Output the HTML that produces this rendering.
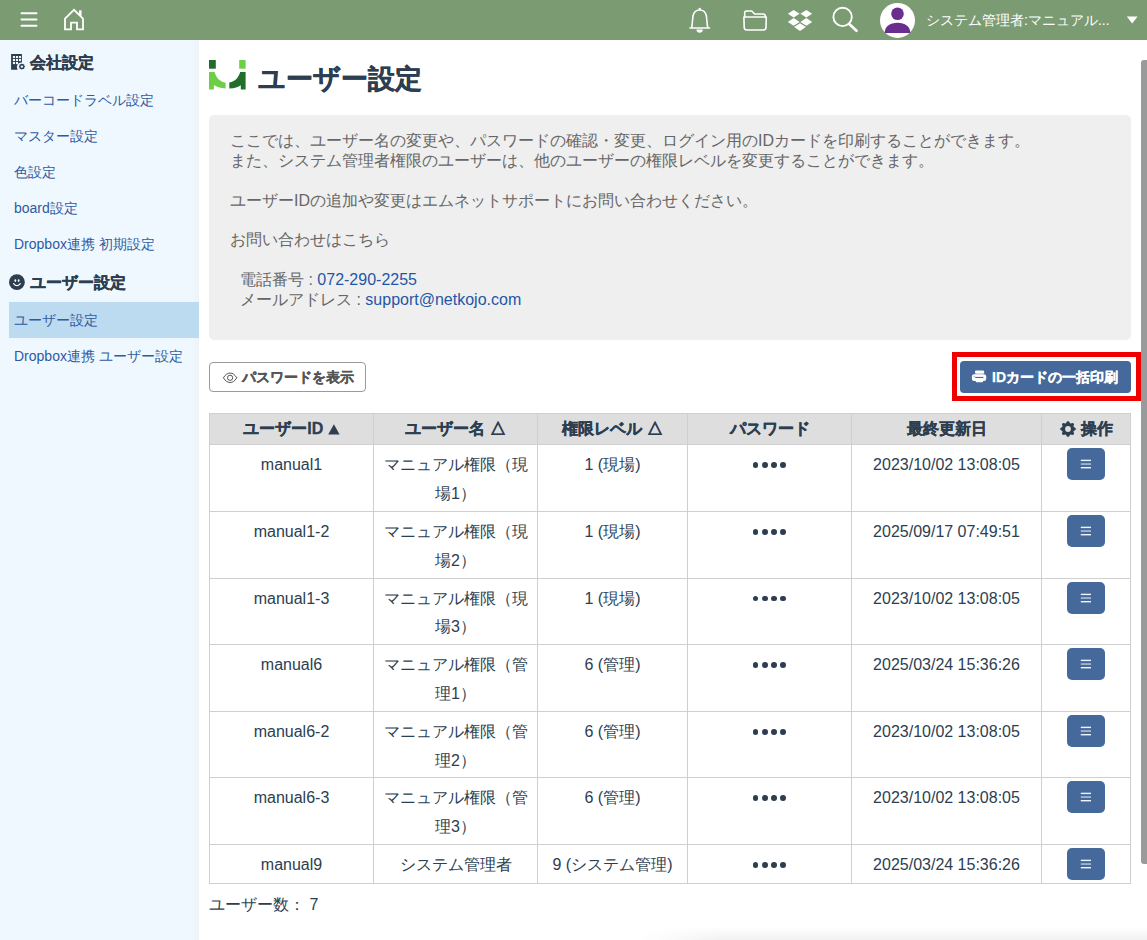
<!DOCTYPE html>
<html lang="ja"><head><meta charset="utf-8">
<style>
*{box-sizing:border-box;margin:0;padding:0}
html,body{width:1147px;height:940px;overflow:hidden;background:#fff;font-family:"Liberation Sans",sans-serif;color:#333}
#top{position:absolute;left:0;top:0;width:1147px;height:40px;background:#7b9b73}
#side{position:absolute;left:0;top:40px;width:199px;height:900px;background:linear-gradient(to right,#f0f8ff 0,#f0f8ff 192px,#eef3f7 199px)}
#main{position:absolute;left:199px;top:40px;width:948px;height:900px;background:#fff}
.abs{position:absolute}
.sh{position:absolute;left:30px;font-size:16px;font-weight:bold;color:#2c3e50;-webkit-text-stroke:0.3px #2c3e50;line-height:20px;white-space:nowrap}
.si{position:absolute;left:14px;font-size:14px;color:#2e5ba0;line-height:20px;white-space:nowrap}
.sel{position:absolute;left:9px;top:302px;width:190px;height:36px;background:#bcdaf0}
#title{position:absolute;left:258px;top:62px;font-size:27px;-webkit-text-stroke:0.4px #2c3e50;font-weight:bold;color:#2c3e50;line-height:34px;white-space:nowrap}
#info{position:absolute;left:209px;top:115px;width:922px;height:225px;background:#efefef;border-radius:5px}
.it{position:absolute;left:230px;font-size:16px;color:#666;line-height:20px;white-space:nowrap}
.lk{color:#1f57a8}
#pwbtn{position:absolute;left:209px;top:362px;width:157px;height:30px;border:1px solid #9a9a9a;border-radius:4px;background:#fff}
#pwbtn span{position:absolute;left:32px;top:5px;font-size:14px;font-weight:bold;color:#555;-webkit-text-stroke:0.25px #555;line-height:18px;white-space:nowrap}
#redbox{position:absolute;left:952px;top:352px;width:189px;height:49px;border:5px solid #f00000}
#idbtn{position:absolute;left:960px;top:361px;width:171px;height:32px;background:#46699b;border-radius:4px}
#idbtn span{position:absolute;left:32px;top:7px;font-size:14px;font-weight:bold;color:#fff;-webkit-text-stroke:0.25px #fff;line-height:18px;white-space:nowrap}
table{position:absolute;left:209px;top:413px;width:921px;border-collapse:collapse;table-layout:fixed}
th,td{border:1px solid #cfcfcf;text-align:center;vertical-align:top;font-size:16px;padding:4px 8px}td{padding:6px 8px 2px}
th{background:#dedede;color:#2c3e50;font-weight:bold;line-height:22.4px;-webkit-text-stroke:0.3px #2c3e50}
td{color:#2c3e50;line-height:28.8px}
.obw{height:28.8px;position:relative}.ob{position:absolute;left:17px;top:-3px;width:38px;height:32px;background:#45699b;border-radius:5px}.ob svg{position:absolute;left:0;top:0}
#count{position:absolute;left:209px;top:895px;font-size:16px;color:#2c3e50;line-height:20px;white-space:nowrap}
#scroll{position:absolute;left:1141px;top:60px;width:6px;height:804px;background:#9a9a9a;border-radius:3px 0 0 3px}
.dots{display:inline-block;height:28.8px;vertical-align:top;position:relative;width:37px}.dots b{float:left;width:5.8px;height:5.8px;border-radius:50%;background:#2c3e50;margin:11px 1.7px 0 1.7px}
</style></head><body>
<div id="top"></div>
<svg class="abs" style="left:0;top:0" width="1147" height="40" viewBox="0 0 1147 40">
<g stroke="#fff" stroke-width="2" stroke-linecap="round" fill="none">
<path d="M21.5 13.2H36.5M21.5 19.5H36.5M21.5 25.7H36.5"/>
</g>
<g stroke="#fff" stroke-width="1.8" fill="none" stroke-linejoin="miter">
<path d="M65 29.3V18.7L74 9.8L83 18.7V29.3H77V22.6H71V29.3Z"/>
<path d="M80.3 15.8V10.3" stroke-width="2.5"/>
</g>
<g stroke="#fff" stroke-width="1.6" fill="none" stroke-linecap="round" stroke-linejoin="round">
<path d="M690 28H709.5M691.6 28C692.6 23 692.5 19 693 16C693.8 12 696.2 10 699.7 10C703.2 10 705.6 12 706.4 16C706.9 19 706.8 23 707.8 28"/>
<path d="M744.7 16.8V12.8Q744.7 11 746.5 11H751.8L754.6 14H763.2Q765.2 14 765.2 16V16.8"/>
<path d="M743.9 17H766.3L766 27.3Q766 30 763.3 30H746.9Q744.2 30 744.2 27.3Z"/>
</g>
<circle cx="699.7" cy="9" r="1.2" fill="#fff"/>
<path d="M696.5 29.5H702.8A3.15 3.15 0 0 1 696.5 29.5Z" fill="#fff"/>
<g fill="#fff">
<path d="M787.8 13.7L793.7 9.9L799.6 13.7L793.7 17.5Z"/>
<path d="M800.4 13.7L806.3 9.9L812.2 13.7L806.3 17.5Z"/>
<path d="M787.8 21.9L793.7 18.1L799.6 21.9L793.7 25.7Z"/>
<path d="M800.4 21.9L806.3 18.1L812.2 21.9L806.3 25.7Z"/>
<path d="M794.1 27.1L800 23.3L805.9 27.1L800 30.9Z"/>
</g>
<g stroke="#fff" fill="none" stroke-linecap="round">
<circle cx="842.6" cy="16.9" r="9.2" stroke-width="1.9"/>
<path d="M849.5 24.3L856.5 30.8" stroke-width="2.6"/>
</g>
<circle cx="897.5" cy="20.4" r="17.5" fill="#fff"/>
<circle cx="897.5" cy="13.7" r="6.3" fill="#6a2e8e"/>
<path d="M884.7 33C884.7 26.5 890 22.8 897.5 22.8C905 22.8 910.3 26.5 910.3 33Z" fill="#6a2e8e"/>
<path d="M1126.8 16.6H1137.6L1132.2 23.5Z" fill="#fff"/>
</svg>
<div class="abs" style="left:926px;top:10px;font-size:14px;color:#fff;line-height:20px;white-space:nowrap">システム管理者:マニュアル...</div>
<div id="side">
</div>
<div id="main"></div>

<!-- sidebar -->
<div class="sh" style="top:53px">会社設定</div>
<div class="si" style="top:90px">バーコードラベル設定</div>
<div class="si" style="top:126px">マスター設定</div>
<div class="si" style="top:162px">色設定</div>
<div class="si" style="top:198px">board設定</div>
<div class="si" style="top:234px">Dropbox連携 初期設定</div>
<div class="sh" style="top:273px">ユーザー設定</div>
<div class="sel"></div>
<div class="si" style="top:310px">ユーザー設定</div>
<div class="si" style="top:346px">Dropbox連携 ユーザー設定</div>

<svg class="abs" style="left:0;top:0" width="260" height="300" viewBox="0 0 260 300">
<rect x="209" y="60" width="6.8" height="8.7" fill="#1f6e2b"/>
<rect x="239.2" y="60" width="6.4" height="8.7" fill="#6ccf45"/>
<path d="M209 72H214.5C216.5 78 219.5 81.5 225.6 82.7V88.5C220 88.2 216.5 86.8 213.9 85.1V89.6H209Z" fill="#6ccf45"/>
<path d="M245.6 72H240.2C238.2 78 235.2 81.5 229.3 82.6V88.5C234.8 88.2 238.2 86.8 240.8 85.2V89.6H245.6Z" fill="#1f6e2b"/>
<path d="M11.1 54.1H21.9V62.6A4.6 4.6 0 0 0 17.6 69.8H11.1Z" fill="#2c3e50"/>
<g fill="#f0f8ff">
<rect x="12.9" y="56" width="2.1" height="2.1"/><rect x="15.9" y="56" width="2.1" height="2.1"/><rect x="18.9" y="56" width="2.1" height="2.1"/>
<rect x="12.9" y="59" width="2.1" height="2.1"/><rect x="15.9" y="59" width="2.1" height="2.1"/><rect x="18.9" y="59" width="2.1" height="2.1"/>
<rect x="12.9" y="62" width="2.1" height="2.1"/><rect x="15.9" y="62" width="2.1" height="2.1"/>
</g>
<g transform="translate(21.9 66.6)" fill="#2c3e50">
<path d="M-2.3 -2.3H2.3V2.3H-2.3Z"/><path d="M0 -3.2L3.2 0L0 3.2L-3.2 0Z"/>
<circle r="1.2" fill="#f0f8ff"/>
</g>
<circle cx="16.9" cy="282.2" r="7.9" fill="#2c3e50"/>
<ellipse cx="15.3" cy="280.6" rx="0.9" ry="1.3" fill="#fff"/>
<ellipse cx="18.6" cy="280.6" rx="0.9" ry="1.3" fill="#fff"/>
<path d="M13.6 283.6Q16.9 287.8 20.3 283.6" stroke="#fff" stroke-width="1.2" fill="none" stroke-linecap="round"/>
</svg>
<div id="title">ユーザー設定</div>
<div id="info"></div>
<div class="it" style="top:131px">ここでは、ユーザー名の変更や、パスワードの確認・変更、ログイン用のIDカードを印刷することができます。</div>
<div class="it" style="top:151px">また、システム管理者権限のユーザーは、他のユーザーの権限レベルを変更することができます。</div>
<div class="it" style="top:191px">ユーザーIDの追加や変更はエムネットサポートにお問い合わせください。</div>
<div class="it" style="top:230px">お問い合わせはこちら</div>
<div class="it" style="top:270px;left:240px">電話番号 : <span class="lk">072-290-2255</span></div>
<div class="it" style="top:290px;left:240px">メールアドレス : <span class="lk">support@netkojo.com</span></div>

<div id="pwbtn"><svg class="abs" style="left:0;top:0" width="40" height="30" viewBox="209 362 40 30"><path d="M222.4 376.8C224.6 373.4 226.6 372.1 229.1 372.1C231.6 372.1 233.6 373.4 235.8 376.8C233.6 380.2 231.6 381.5 229.1 381.5C226.6 381.5 224.6 380.2 222.4 376.8Z" stroke="#555" stroke-width="1" fill="none"/><circle cx="229.1" cy="376.8" r="2.6" stroke="#555" stroke-width="1" fill="none"/></svg><span>パスワードを表示</span></div>
<div id="redbox"></div>
<div id="idbtn"><svg class="abs" style="left:0;top:0" width="40" height="32" viewBox="960 361 40 32"><rect x="975" y="370.4" width="9.2" height="3.4" rx="1.3" fill="#fff"/><rect x="971.9" y="374.2" width="14.3" height="6.7" rx="2.2" fill="#fff"/><rect x="975.2" y="376.9" width="8.2" height="1.2" fill="#45699b"/><rect x="975.8" y="378" width="7.2" height="4.2" rx="0.6" fill="#fff"/><circle cx="974.2" cy="376.3" r="0.5" fill="#45699b"/></svg><span>IDカードの一括印刷</span></div>

<table>
<colgroup><col style="width:164px"><col style="width:164px"><col style="width:150px"><col style="width:164px"><col style="width:190px"><col style="width:89px"></colgroup>
<tr><th>ユーザーID <svg width="12" height="11" viewBox="0 0 12 11" style="vertical-align:-1px"><path d="M0.2 10.6H11.6L5.9 0.2Z" fill="#2c3e50"/></svg></th><th>ユーザー名 △</th><th>権限レベル △</th><th>パスワード</th><th>最終更新日</th><th><svg width="16" height="16" viewBox="-8 -8 16 16" style="vertical-align:-2px;margin-right:6px;position:relative;left:1px;top:1px"><path d="M-2.26 -5.45 L-0.82 -7.76 L0.82 -7.76 L2.26 -5.45 L2.26 -5.45 L4.91 -6.06 L6.06 -4.91 L5.45 -2.26 L5.45 -2.26 L7.76 -0.82 L7.76 0.82 L5.45 2.26 L5.45 2.26 L6.06 4.91 L4.91 6.06 L2.26 5.45 L2.26 5.45 L0.82 7.76 L-0.82 7.76 L-2.26 5.45 L-2.26 5.45 L-4.91 6.06 L-6.06 4.91 L-5.45 2.26 L-5.45 2.26 L-7.76 0.82 L-7.76 -0.82 L-5.45 -2.26 L-5.45 -2.26 L-6.06 -4.91 L-4.91 -6.06 L-2.26 -5.45Z" fill="#2c3e50"/><circle r="2.9" fill="#dedede"/></svg>操作</th></tr>
<tr><td>manual1</td><td>マニュアル権限（現場1）</td><td>1 (現場)</td><td><span class="dots"><b></b><b></b><b></b><b></b></span></td><td>2023/10/02 13:08:05</td><td><div class="obw"><span class="ob"><svg width="38" height="32"><rect x="13.8" y="11.7" width="10.2" height="1.4" fill="#f0f4fa"/><rect x="13.8" y="15.2" width="10.2" height="1.7" fill="#a9bad2"/><rect x="13.8" y="19" width="10.2" height="1.4" fill="#f0f4fa"/></svg></span></div></td></tr>
<tr><td>manual1-2</td><td>マニュアル権限（現場2）</td><td>1 (現場)</td><td><span class="dots"><b></b><b></b><b></b><b></b></span></td><td>2025/09/17 07:49:51</td><td><div class="obw"><span class="ob"><svg width="38" height="32"><rect x="13.8" y="11.7" width="10.2" height="1.4" fill="#f0f4fa"/><rect x="13.8" y="15.2" width="10.2" height="1.7" fill="#a9bad2"/><rect x="13.8" y="19" width="10.2" height="1.4" fill="#f0f4fa"/></svg></span></div></td></tr>
<tr><td>manual1-3</td><td>マニュアル権限（現場3）</td><td>1 (現場)</td><td><span class="dots"><b></b><b></b><b></b><b></b></span></td><td>2023/10/02 13:08:05</td><td><div class="obw"><span class="ob"><svg width="38" height="32"><rect x="13.8" y="11.7" width="10.2" height="1.4" fill="#f0f4fa"/><rect x="13.8" y="15.2" width="10.2" height="1.7" fill="#a9bad2"/><rect x="13.8" y="19" width="10.2" height="1.4" fill="#f0f4fa"/></svg></span></div></td></tr>
<tr><td>manual6</td><td>マニュアル権限（管理1）</td><td>6 (管理)</td><td><span class="dots"><b></b><b></b><b></b><b></b></span></td><td>2025/03/24 15:36:26</td><td><div class="obw"><span class="ob"><svg width="38" height="32"><rect x="13.8" y="11.7" width="10.2" height="1.4" fill="#f0f4fa"/><rect x="13.8" y="15.2" width="10.2" height="1.7" fill="#a9bad2"/><rect x="13.8" y="19" width="10.2" height="1.4" fill="#f0f4fa"/></svg></span></div></td></tr>
<tr><td>manual6-2</td><td>マニュアル権限（管理2）</td><td>6 (管理)</td><td><span class="dots"><b></b><b></b><b></b><b></b></span></td><td>2023/10/02 13:08:05</td><td><div class="obw"><span class="ob"><svg width="38" height="32"><rect x="13.8" y="11.7" width="10.2" height="1.4" fill="#f0f4fa"/><rect x="13.8" y="15.2" width="10.2" height="1.7" fill="#a9bad2"/><rect x="13.8" y="19" width="10.2" height="1.4" fill="#f0f4fa"/></svg></span></div></td></tr>
<tr><td>manual6-3</td><td>マニュアル権限（管理3）</td><td>6 (管理)</td><td><span class="dots"><b></b><b></b><b></b><b></b></span></td><td>2023/10/02 13:08:05</td><td><div class="obw"><span class="ob"><svg width="38" height="32"><rect x="13.8" y="11.7" width="10.2" height="1.4" fill="#f0f4fa"/><rect x="13.8" y="15.2" width="10.2" height="1.7" fill="#a9bad2"/><rect x="13.8" y="19" width="10.2" height="1.4" fill="#f0f4fa"/></svg></span></div></td></tr>
<tr style="height:39px"><td>manual9</td><td>システム管理者</td><td>9 (システム管理)</td><td><span class="dots"><b></b><b></b><b></b><b></b></span></td><td>2025/03/24 15:36:26</td><td><div class="obw"><span class="ob"><svg width="38" height="32"><rect x="13.8" y="11.7" width="10.2" height="1.4" fill="#f0f4fa"/><rect x="13.8" y="15.2" width="10.2" height="1.7" fill="#a9bad2"/><rect x="13.8" y="19" width="10.2" height="1.4" fill="#f0f4fa"/></svg></span></div></td></tr>
</table>
<div id="count">ユーザー数： 7</div>
<div id="scroll"></div>
<div class="abs" style="left:640px;top:926px;width:507px;height:14px;background:linear-gradient(to bottom,rgba(0,0,0,0),rgba(0,0,0,0.05));-webkit-mask-image:linear-gradient(to right,transparent,#000 80px)"></div>
</body></html>
